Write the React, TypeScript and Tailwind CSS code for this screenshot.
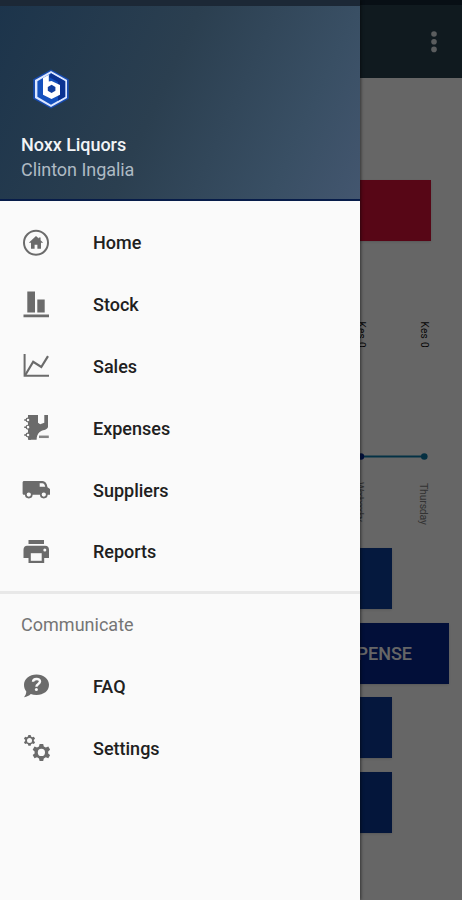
import React from "react";

const ICON = "w-7 h-7 shrink-0";

const HomeIcon = () => (
  <svg className={ICON} viewBox="0 0 28 28" fill="#6b6b6b">
    <circle cx="14" cy="13.8" r="12" fill="none" stroke="#6b6b6b" strokeWidth="2" />
    <path d="M14 7 L6.8 13.8 H9 V19.8 H12.6 V15.8 H15.4 V19.8 H19 V13.8 H21.2 L18.6 11.3 V8.4 H16.8 V9.6 Z" />
  </svg>
);

const StockIcon = () => (
  <svg className={ICON} viewBox="0 0 28 28" fill="#6b6b6b">
    <path d="M5.3 .6 H13 V21.4 H5.3 Z M15.3 8.6 H22.7 V21.4 H15.3 Z M1.5 23.6 H27 V26.2 H1.5 Z" />
  </svg>
);

const SalesIcon = () => (
  <svg className={ICON} viewBox="0 0 28 28" fill="none" stroke="#6b6b6b">
    <path d="M2.6 2 V23.8 H27" strokeWidth="2" />
    <path d="M3 23.5 L11.2 9.8 L19.3 15 L26 4.2" strokeWidth="2.2" />
  </svg>
);

const ExpensesIcon = () => (
  <svg className={ICON} viewBox="0 0 28 28">
    <path
      d="M6 1 H16 V8.8 L18.2 10.2 L22.3 8.8 V1 H26 V13 C25.4 16.2 20 15.8 17.4 18.2 C15.4 20.2 14.8 22 14.6 25.8 H7 V1 Z"
      fill="#6b6b6b"
    />
    <path d="M6 1 H9 V25.8 H6 Z" fill="#6b6b6b" />
    <g fill="#fafafa" stroke="#6b6b6b" strokeWidth="1.1">
      <circle cx="6" cy="6" r="1.9" />
      <circle cx="6" cy="13.2" r="1.9" />
      <circle cx="6" cy="21" r="1.9" />
    </g>
    <path d="M2.2 6 H5 M2.2 13.2 H5 M2.2 21 H5" stroke="#6b6b6b" strokeWidth="1.6" />
    <path d="M17 22.8 H26.8" stroke="#858585" strokeWidth="2.5" />
  </svg>
);

const SuppliersIcon = () => (
  <svg className={ICON} viewBox="0 0 28 28" fill="#6b6b6b">
    <path d="M2.2 5 H20.3 C24 5.2 25 8.5 25.5 11.2 L28 13 V18.8 H2.2 C.8 18.8 .6 18 .6 17 V6.6 C.6 5.6 1.2 5 2.2 5 Z" />
    <path d="M17.7 7.3 H20.2 C22 7.3 22.7 8.7 23.2 10.8 H17.7 Z" fill="#fafafa" />
    <circle cx="6.8" cy="18.6" r="3" fill="#fafafa" stroke="#6b6b6b" strokeWidth="1.7" />
    <circle cx="21.8" cy="18.6" r="3" fill="#fafafa" stroke="#6b6b6b" strokeWidth="1.7" />
  </svg>
);

const ReportsIcon = () => (
  <svg className={ICON} viewBox="0 0 28 28" fill="#6b6b6b">
    <path d="M6.5 2 H22 V6 H6.5 Z" />
    <path d="M5 7.8 H23.2 C25.6 7.8 27 9.4 27 11.8 V20 H22.2 V25 H6.5 V20 H1.5 V11.8 C1.5 9.4 3 7.8 5 7.8 Z" />
    <path d="M8.8 15.2 H19.7 V22.8 H8.8 Z" fill="#fafafa" />
    <circle cx="22.8" cy="11.9" r="1.5" fill="#fafafa" />
  </svg>
);

const FaqIcon = () => (
  <svg className={ICON} viewBox="0 0 28 28">
    <path
      d="M14.5 1.4 C21.6 1.4 27 5.8 27 11.7 C27 17.7 21.6 22 14.5 22 C12.4 22 10.5 21.6 8.8 21 C7 22.8 5 23.8 2 24.2 C3.6 22.4 4.2 20.6 4.3 18.5 C2.8 16.6 2 14.3 2 11.7 C2 5.8 7.4 1.4 14.5 1.4 Z"
      fill="#6b6b6b"
    />
    <path
      d="M11 8.8 C11.2 5.2 18 5 18 8.6 C18 11 14.4 11 14.4 13.8"
      fill="none"
      stroke="#fafafa"
      strokeWidth="2.4"
    />
    <circle cx="14.4" cy="16.4" r="1.5" fill="#fafafa" />
  </svg>
);

const GEAR =
  "M-1.8 -8.5 H1.8 L2.4 -6 L4.4 -4.9 L6.9 -5.8 L8.7 -2.7 L6.8 -1 V1 L8.7 2.7 L6.9 5.8 L4.4 4.9 L2.4 6 L1.8 8.5 H-1.8 L-2.4 6 L-4.4 4.9 L-6.9 5.8 L-8.7 2.7 L-6.8 1 V-1 L-8.7 -2.7 L-6.9 -5.8 L-4.4 -4.9 L-2.4 -6 Z";

const SettingsIcon = () => (
  <svg className={ICON} viewBox="0 0 28 28" fill="#6b6b6b">
    <path d={GEAR} transform="translate(7.5 6.4) scale(.64)" />
    <circle cx="7.5" cy="6.4" r="2.5" fill="#fafafa" />
    <path d={GEAR} transform="translate(19.4 18.4)" />
    <circle cx="19.4" cy="18.4" r="3.6" fill="#fafafa" />
  </svg>
);

const Logo = () => (
  <svg className="w-[38px] h-10 ml-[11px]" viewBox="0 0 38 40">
    <path d="M19 .5 L36.8 10.3 V29.7 L19 39.5 L1.2 29.7 V10.3 Z" fill="#174bb0" />
    <path d="M19 2 L35 11 V29 L19 38 L3 29 V11 Z" fill="#dce6ff" />
    <path d="M19 4.3 L33.2 12.2 V27.8 L19 35.7 L5.4 27.8 V12.2 Z" fill="#1450bd" />
    <path d="M19 4.3 L33.2 12.2 V27.8 L26 31.8 V13 L17 8 Z" fill="#0a3191" />
    <path d="M11 9 L16.8 5.8 V12.6 L19.5 12 L28 16 V25.8 L19.5 30 L11 25.8 Z" fill="#fff" />
    <path d="M19.6 15.8 L23.4 17.9 V21.8 L19.6 23.9 L15.8 21.8 V17.9 Z" fill="#123f9f" />
  </svg>
);

const mainItems = [
  { label: "Home", Icon: HomeIcon },
  { label: "Stock", Icon: StockIcon },
  { label: "Sales", Icon: SalesIcon },
  { label: "Expenses", Icon: ExpensesIcon },
  { label: "Suppliers", Icon: SuppliersIcon },
  { label: "Reports", Icon: ReportsIcon },
];

const communicateItems = [
  { label: "FAQ", Icon: FaqIcon },
  { label: "Settings", Icon: SettingsIcon },
];

const NavList = ({ items }: { items: typeof mainItems }) => (
  <ul>
    {items.map(({ label, Icon }) => (
      <li key={label} className="flex items-center h-[61.8px] pl-[22px] gap-[43px]">
        <Icon />
        <span className="pt-px text-[18px] leading-6 font-medium text-[#202020]">{label}</span>
      </li>
    ))}
  </ul>
);

const DrawerHeader = () => (
  <div className="h-[201px] bg-linear-[115deg,#1c344b_0%,#2b3f50_45%,#394f64_80%,#43566f_100%] border-b-2 border-[#071c49]">
    <div className="h-[6px] bg-[#1c2836]" />
    <div className="pt-[63px] pl-[21px]">
      <Logo />
      <div className="mt-6 text-[18px] leading-6 font-medium tracking-[-0.05px] text-[#f2f4f6]">Noxx Liquors</div>
      <div className="text-[18px] leading-[25px] tracking-[-0.05px] text-[#aebac4]">Clinton Ingalia</div>
    </div>
  </div>
);

const Drawer = () => (
  <nav className="absolute inset-y-0 left-0 w-[360px] bg-[#fafafa] shadow-[1px_0_3px_rgba(0,0,0,0.5)]">
    <DrawerHeader />
    <div className="pt-[11px]">
      <NavList items={mainItems} />
    </div>
    <div className="mt-[8px] h-[3px] bg-[#e8e8e8]" />
    <div className="mt-[19px] mb-[19px] pl-[21px] text-[18px] leading-6 tracking-[0.02px] text-[#757575]">
      Communicate
    </div>
    <NavList items={communicateItems} />
  </nav>
);

const Chart = () => (
  <svg className="block w-[462px] h-[254px]" viewBox="0 0 462 254" fontSize="10">
    <g fill="#111">
      <text transform="translate(357.5 27.5) rotate(90)" textLength="26">Kes 0</text>
      <text transform="translate(420.5 27.5) rotate(90)" textLength="26">Kes 0</text>
    </g>
    <path d="M300 162.5 H424" stroke="#0b7cac" strokeWidth="2" />
    <circle cx="361" cy="162.5" r="3.2" fill="#0a2f9c" />
    <circle cx="424.3" cy="162.5" r="3.3" fill="#0b76a4" />
    <g fill="#808080" fontSize="10.5">
      <text transform="translate(356 188) rotate(90)" textLength="40">Wednesday</text>
      <text transform="translate(420 189) rotate(90)" textLength="42">Thursday</text>
    </g>
  </svg>
);

const Button = ({ label, className }: { label?: string; className: string }) => (
  <div className={`flex items-center justify-end h-[61px] shadow-sm text-[18px] font-medium text-white ${className}`}>
    {label}
  </div>
);

const Dashboard = () => (
  <div className="flex flex-col h-full bg-white">
    <div className="h-[5px] bg-[#142636]" />
    <div className="flex items-center justify-end h-[73px] pr-[25px] bg-[#28414f]">
      <svg className="w-[6px] h-6" viewBox="0 0 6 24" fill="#e4e8ec">
        <circle cx="3" cy="4" r="2.8" />
        <circle cx="3" cy="11.7" r="2.8" />
        <circle cx="3" cy="19.4" r="2.8" />
      </svg>
    </div>
    <div className="mt-[102px] w-[431px] h-[61px] bg-[#da1139] shadow-sm" />
    <div className="mt-[53px]">
      <Chart />
    </div>
    <div className="flex flex-col gap-[13.6px]">
      <Button className="w-[392px] bg-[#0d3f9c]" />
      <Button className="w-[449px] pr-[37px] bg-[#06268f]" label="ADD EXPENSE" />
      <Button className="w-[392px] bg-[#0d3a98]" />
      <Button className="w-[392px] bg-[#0b3794]" />
    </div>
  </div>
);

export default function App() {
  return (
    <div className="relative w-[462px] h-[900px] overflow-hidden font-['Roboto',sans-serif]">
      <Dashboard />
      <div className="absolute inset-0 bg-black/60" />
      <Drawer />
    </div>
  );
}
